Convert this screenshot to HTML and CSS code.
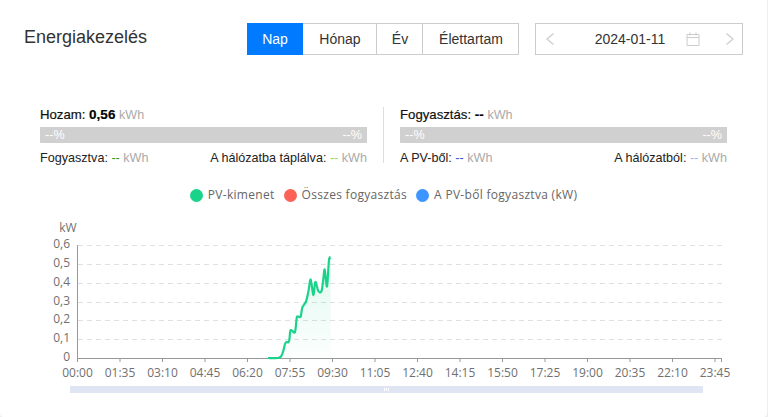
FILE: index.html
```html
<!DOCTYPE html>
<html lang="en">
<head>
    <meta charset="UTF-8">
    <meta name="viewport" content="width=device-width, initial-scale=1.0">
    <title>Energiakezelés</title>
    <link rel="stylesheet" href="styles.css">
</head>
<body>

<div class="card">
    <header class="top">
        <h1>Energiakezelés</h1>
        <div class="tabs">
            <button class="tab active tab-day">Nap</button>
            <button class="tab tab-month">Hónap</button>
            <button class="tab tab-year">Év</button>
            <button class="tab tab-life">Élettartam</button>
        </div>
        <div class="date-picker">
            <svg width="10" height="14" viewBox="0 0 10 14"><path d="M8.500 1.500 2 7l6.500 5.500" fill="none" stroke="#ccc" stroke-width="1.200"/></svg>
            <span class="date-value">2024-01-11</span>
            <svg class="cal" width="14" height="14" viewBox="0 0 14 14"><path d="M1 2.500h12v11H1zM1 5.500h12M4 .5v3M10 .5v3" fill="none" stroke="#ccc" stroke-width="1"/></svg>
            <svg class="next" width="10" height="14" viewBox="0 0 10 14"><path d="M1.500 1.500 8 7l-6.500 5.500" fill="none" stroke="#ccc" stroke-width="1.200"/></svg>
        </div>
    </header>

    <section class="stats">
        <div class="stat">
            <p class="stat-title">Hozam: <b>0,56</b> <span class="unit">kWh</span></p>
            <div class="bar"><span>--%</span><span>--%</span></div>
            <div class="stat-row">
                <span>Fogyasztva: <i class="c-green">--</i> <span class="unit">kWh</span></span>
                <span>A hálózatba táplálva: <i class="c-lime">--</i> <span class="unit">kWh</span></span>
            </div>
        </div>
        <div class="divider"></div>
        <div class="stat">
            <p class="stat-title">Fogyasztás: <b>--</b> <span class="unit">kWh</span></p>
            <div class="bar"><span>--%</span><span>--%</span></div>
            <div class="stat-row">
                <span>A PV-ből: <i class="c-blue">--</i> <span class="unit">kWh</span></span>
                <span>A hálózatból: <i class="c-sky">--</i> <span class="unit">kWh</span></span>
            </div>
        </div>
    </section>

    <div class="legend">
        <span class="legend-item"><i class="dot dot-green"></i>PV-kimenet</span>
        <span class="legend-item"><i class="dot dot-red"></i>Összes fogyasztás</span>
        <span class="legend-item"><i class="dot dot-blue"></i>A PV-ből fogyasztva (kW)</span>
    </div>

    <svg class="chart" id="chart" width="767" height="165" viewBox="0 215 767 165"></svg>
    <div class="slider"><span class="grip"></span><span class="grip"></span><span class="grip"></span></div>
</div>

<script>
    const svgNs = "http://www.w3.org/2000/svg";
    const chart = document.getElementById("chart");
    const times = ["00:00","01:35","03:10","04:45","06:20","07:55","09:30","11:05","12:40","14:15","15:50","17:25","19:00","20:35","22:10","23:45"];
    const yLabels = ["0","0,1","0,2","0,3","0,4","0,5","0,6"];
    const points = [[268,358],[278,358],[281,356.500],[283,352],[285,344],[286.500,342],[289,341.500],[290.300,331],[292,330.500],[295,332],[296.700,318],[298,316.500],[300.700,316.500],[302.300,307.500],[306,301.500],[308.500,291],[310.700,279.500],[313.300,295],[315.300,282],[318.300,291],[321.300,291.500],[323,282],[324.700,269.500],[327,286.500],[329,260],[330.700,257.700]];

    function add(name, attrs, text) {
        const el = document.createElementNS(svgNs, name);
        Object.keys(attrs).forEach(key => el.setAttribute(key, attrs[key]));
        if (text) el.textContent = text;
        chart.appendChild(el);
        return el;
    }

    // catmull-rom through the samples, the reference line is smoothed
    function smoothPath(pts) {
        let d = "M" + pts[0].join(" ");
        for (let i = 0; i < pts.length - 1; i++) {
            const p0 = pts[i - 1] || pts[i];
            const p1 = pts[i];
            const p2 = pts[i + 1];
            const p3 = pts[i + 2] || p2;
            const c1 = [p1[0] + (p2[0] - p0[0]) / 6, p1[1] + (p2[1] - p0[1]) / 6];
            const c2 = [p2[0] - (p3[0] - p1[0]) / 6, p2[1] - (p3[1] - p1[1]) / 6];
            d += " C" + c1.join(" ") + " " + c2.join(" ") + " " + p2.join(" ");
        }
        return d;
    }

    function renderChart() {
        const defs = add("defs", {});
        defs.innerHTML = '<linearGradient id="fade" x1="0" y1="0" x2="0" y2="1"><stop offset="0" stop-color="#19d38a" stop-opacity="0.14"/><stop offset="1" stop-color="#19d38a" stop-opacity="0.01"/></linearGradient>';

        yLabels.forEach((label, i) => {
            const y = Math.round(358 - i * 18.8);
            if (i > 0) add("line", { x1: 78, x2: 722, y1: y + 0.5, y2: y + 0.5, class: "grid" });
            add("text", { x: 70, y: y + 2.5, "text-anchor": "end", class: "axis-text" }, label);
        });
        add("text", { x: 68, y: 232, "text-anchor": "middle", class: "axis-text" }, "kW");

        const line = smoothPath(points);
        add("path", { d: line + " L330.700 358 L268 358 Z", fill: "url(#fade)" });

        add("line", { x1: 77.5, x2: 77.5, y1: 245, y2: 358, class: "axis" });
        add("line", { x1: 77, x2: 722, y1: 358.5, y2: 358.5, class: "axis" });
        times.forEach((time, i) => {
            const x = 77.5 + i * 42.5;
            add("line", { x1: x, x2: x, y1: 358, y2: 362, class: "axis" });
            add("text", { x: x, y: 377, "text-anchor": "middle", class: "axis-text" }, time);
        });
        add("line", { x1: 721.5, x2: 721.5, y1: 358, y2: 362, class: "axis" });

        add("path", { d: line, class: "pv-line" });
    }

    renderChart();
</script>

</body>
</html>
```

FILE: styles.css
```css
* {
    box-sizing: border-box;
}
body {
    margin: 0;
    height: 417px;
    overflow: hidden;
    background: #eeeeee;
    font-family: "Liberation Sans", Arial, sans-serif;
    font-size: 12.6px;
    color: #222;
}
.card {
    width: 767px;
    height: 417px;
    background: white;
    border-radius: 0 0 4px 4px;
    padding-top: 23px;
}
.top {
    display: flex;
    align-items: flex-start;
    padding-left: 24px;
}
h1 {
    margin: 3px 0 0;
    width: 223px;
    font-size: 18px;
    line-height: 22px;
    font-weight: normal;
    color: #333;
}
.tabs {
    display: flex;
    height: 32px;
}
.tab {
    border: 1px solid #ccc;
    border-left: none;
    background: white;
    font-family: inherit;
    font-size: 14px;
    color: #333;
    padding: 0 0 0 1px;
}
.tab-day { width: 56px; }
.tab-month { width: 74px; }
.tab-year { width: 46px; }
.tab-life { width: 96px; }
.tab.active {
    background: #007bff;
    border-color: #007bff;
    color: white;
}
.date-picker {
    display: flex;
    align-items: center;
    width: 208px;
    height: 32px;
    margin-left: 16px;
    padding: 0 7px 0 9px;
    border: 1px solid #ccc;
    font-size: 14px;
    color: #333;
}
.date-picker svg {
    flex: none;
}
.date-value {
    flex: none;
    width: 80px;
    margin-left: 35px;
    text-align: center;
}
.cal {
    margin-left: 16px;
}
.next {
    margin-left: 25px;
}
.stats {
    display: flex;
    margin-top: 52px;
    padding-left: 40px;
}
.stat {
    width: 327px;
}
.divider {
    width: 1px;
    height: 56px;
    margin: 0 16px;
    background: #ddd;
}
.stat-title {
    margin: 0;
    height: 20px;
    line-height: 16px;
    font-size: 13.2px;
    color: #111;
    -webkit-text-stroke: 0.2px #111;
}
.stat-title b {
    font-size: 13.5px;
    color: #000;
}
.unit {
    color: #aaa;
    font-size: 12.6px;
    -webkit-text-stroke: 0;
}
.bar {
    display: flex;
    justify-content: space-between;
    height: 16px;
    line-height: 16px;
    padding: 0 5px;
    background: #d0d0d0;
    color: white;
}
.stat-row {
    display: flex;
    justify-content: space-between;
    margin-top: 7px;
    line-height: 16px;
}
.stat-row i {
    font-style: normal;
}
.c-green { color: #2a9a1a; }
.c-lime { color: #8fdc6a; }
.c-blue { color: #2f55d4; }
.c-sky { color: #9db8f5; }
.legend {
    display: flex;
    justify-content: center;
    gap: 9px;
    margin-top: 21px;
    font-family: "Open Sans", sans-serif;
    font-size: 12px;
    letter-spacing: 0.3px;
    line-height: 16px;
    color: #666;
}
.legend-item {
    display: flex;
    align-items: center;
}
.dot {
    width: 13px;
    height: 13px;
    margin-right: 5px;
    border-radius: 50%;
}
.dot-green { background: #19d38a; }
.dot-red { background: #fb6157; }
.dot-blue { background: #3d96ff; }
.chart {
    display: block;
    margin-top: 12px;
}
.grid {
    stroke: #e0e0e0;
    stroke-dasharray: 5 4;
}
.axis {
    stroke: #999;
}
.axis-text {
    font-family: "Open Sans", sans-serif;
    font-size: 12px;
    fill: #707070;
}
.pv-line {
    fill: none;
    stroke: #19d38a;
    stroke-width: 2.2;
    stroke-linejoin: round;
}
.slider {
    display: flex;
    justify-content: center;
    align-items: center;
    gap: 1px;
    width: 633px;
    height: 7px;
    margin: 6px 0 0 70px;
    background: #dfe5f3;
}
.grip {
    width: 1px;
    height: 3px;
    background: white;
}
```
